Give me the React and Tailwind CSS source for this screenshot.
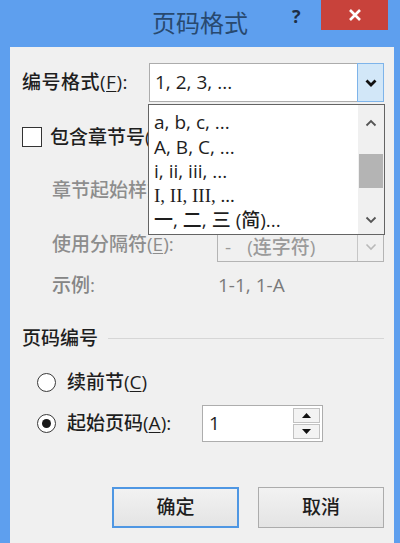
import React from "react";

// page number format dialog (Word, Windows 8 chrome)

const Chevron = ({ up = false, color = "#111", sw = 2.4, w = 12 }) => (
  <svg width={w} height={8} viewBox="0 0 12 8">
    <path
      d={up ? "M1.5 6.5L6 2l4.5 4.5" : "M1.5 1.5L6 6l4.5-4.5"}
      fill="none"
      stroke={color}
      strokeWidth={sw}
    />
  </svg>
);

const Tri = ({ up = false }) => (
  <svg width="9" height="5" viewBox="0 0 9 5">
    <path d={up ? "M0 5h9L4.5 0z" : "M0 0h9L4.5 5z"} fill="#111" />
  </svg>
);

const Key = ({ children }) => <span className="underline underline-offset-2">{children}</span>;

const formats = [
  { label: "a, b, c, ...", serif: false },
  { label: "A, B, C, ...", serif: false },
  { label: "i, ii, iii, ...", serif: false },
  { label: "I, II, III, ...", serif: true },
  { label: "一, 二, 三 (简)...", serif: false },
];

const App = () => {
  return (
    <div className="w-[400px] h-[543px] bg-[#5e9fee] flex flex-col overflow-hidden font-['Open_Sans','Noto_Sans_CJK_SC',sans-serif] text-[#1e1e1e]">
      {/* title bar */}
      <div className="relative h-[47px] shrink-0 flex items-center justify-center">
        <span className="text-[24px] leading-none text-[#28496f] -mt-[2px]">页码格式</span>
        <span className="absolute left-[292px] top-[3px] text-[18px] font-bold text-[#1d2f47]">?</span>
        <div className="absolute left-[321px] top-0 w-[67px] h-[30px] bg-[#c8423b] flex items-center justify-center">
          <svg width="14" height="14" viewBox="0 0 14 14">
            <path d="M2 2l10 10M12 2L2 12" stroke="#fff" strokeWidth="2.6" />
          </svg>
        </div>
      </div>

      {/* client */}
      <div className="relative flex-1 ml-[10px] mr-[6px] bg-[#f0f0f0] pl-[12px] pr-[10px] flex flex-col text-[19px] font-medium">
        <div className="mt-[16px] h-[39px] flex items-center">
          <span className="w-[127px] shrink-0 tracking-[0.5px]">
            编号格式(<Key>F</Key>):
          </span>
          <div className="flex-1 h-full flex border border-[#acacac] bg-white">
            <span className="flex-1 flex items-center pl-[5px]">1, 2, 3, ...</span>
            <div className="w-[27px] -my-px -mr-px flex items-center justify-center border border-[#7eb4ea] bg-[#d2e7f8]">
              <Chevron sw={2.8} />
            </div>
          </div>
        </div>

        {/* labels below are cut where the open list covers them */}
        <div className="mt-[23px] h-[24px] flex items-center">
          <div className="w-[20px] h-[20px] border border-[#333] bg-white" />
          <span className="ml-[8px] w-[98px] overflow-hidden whitespace-nowrap">包含章节号(N)</span>
        </div>

        <div className="mt-[27px] h-[28px] flex items-center pl-[30px] text-[#8d8d8d]">
          <span className="w-[96px] overflow-hidden whitespace-nowrap">章节起始样式(P):</span>
        </div>

        <div className="mt-[28px] h-[30px] flex items-center pl-[30px] text-[#8d8d8d]">
          <span className="w-[165px] shrink-0 -mt-[6px]">
            使用分隔符(<Key>E</Key>):
          </span>
          <div className="flex-1 h-full flex border border-[#b4b4b4]">
            <span className="flex-1 flex items-center pl-[7px] gap-[16px] text-[#9a9a9a]">
              <span>-</span>
              <span>(连字符)</span>
            </span>
            <div className="w-[26px] flex items-center justify-center border-l border-[#c6c6c6]">
              <Chevron color="#b9b9b9" sw={1.6} />
            </div>
          </div>
        </div>

        <div className="mt-[11px] h-[24px] flex items-center pl-[30px] text-[#858585]">
          <span className="w-[166px] shrink-0">示例:</span>
          <span className="text-[#7a7a7a]">1-1, 1-A</span>
        </div>

        <div className="mt-[29px] h-[24px] flex items-center">
          <span>页码编号</span>
          <div className="flex-1 h-px bg-[#d6d6d6] ml-[10px]" />
        </div>

        <div className="mt-[20px] h-[24px] flex items-center pl-[15px]">
          <div className="w-[19px] h-[19px] rounded-full border border-[#3a3a3a] bg-white" />
          <span className="ml-[11px]">
            续前节(<Key>C</Key>)
          </span>
        </div>

        <div className="mt-[11px] h-[37px] flex items-center pl-[15px]">
          <div className="w-[19px] h-[19px] rounded-full border border-[#3a3a3a] bg-white flex items-center justify-center">
            <div className="w-[9px] h-[9px] rounded-full bg-[#1a1a1a]" />
          </div>
          <span className="ml-[11px] w-[135px] shrink-0">
            起始页码(<Key>A</Key>):
          </span>
          <div className="w-[121px] h-full flex border border-[#adadad] bg-white">
            <span className="flex-1 flex items-center pl-[6px]">1</span>
            <div className="w-[27px] my-[2px] mr-[2px] flex flex-col gap-px">
              <div className="flex-1 flex items-center justify-center border border-[#c2c2c2] bg-[#f3f3f3]">
                <Tri up />
              </div>
              <div className="flex-1 flex items-center justify-center border border-[#c2c2c2] bg-[#f3f3f3]">
                <Tri />
              </div>
            </div>
          </div>
        </div>

        <div className="mt-[45px] h-[41px] flex justify-end gap-[19px]">
          <button className="w-[127px] h-full border-2 border-[#4f97e3] bg-gradient-to-b from-[#f2f2f2] to-[#e4e4e4]">
            确定
          </button>
          <button className="w-[126px] h-full border border-[#acacac] bg-gradient-to-b from-[#f2f2f2] to-[#e4e4e4]">
            取消
          </button>
        </div>

        {/* open list of the number format combo */}
        <div className="absolute left-[138px] top-[57px] w-[237px] h-[131px] border border-[#646464] bg-white flex">
          <ul className="flex-1 pt-[5px] pl-[5px]">
            {formats.map((f) => (
              <li
                key={f.label}
                className={`h-[24.5px] flex items-center whitespace-nowrap ${f.serif ? "font-['Liberation_Serif',serif]" : ""}`}
              >
                {f.label}
              </li>
            ))}
          </ul>
          <div className="w-[26px] bg-[#f0f0f0] flex flex-col">
            <div className="h-[36px] flex items-center justify-center">
              <Chevron up color="#555" sw={1.8} />
            </div>
            <div className="mt-[13px] mx-px h-[34px] bg-[#b4b4b4]" />
            <div className="flex-1" />
            <div className="h-[29px] flex items-center justify-center">
              <Chevron color="#555" sw={1.8} />
            </div>
          </div>
        </div>
      </div>
    </div>
  );
};

export default App;
